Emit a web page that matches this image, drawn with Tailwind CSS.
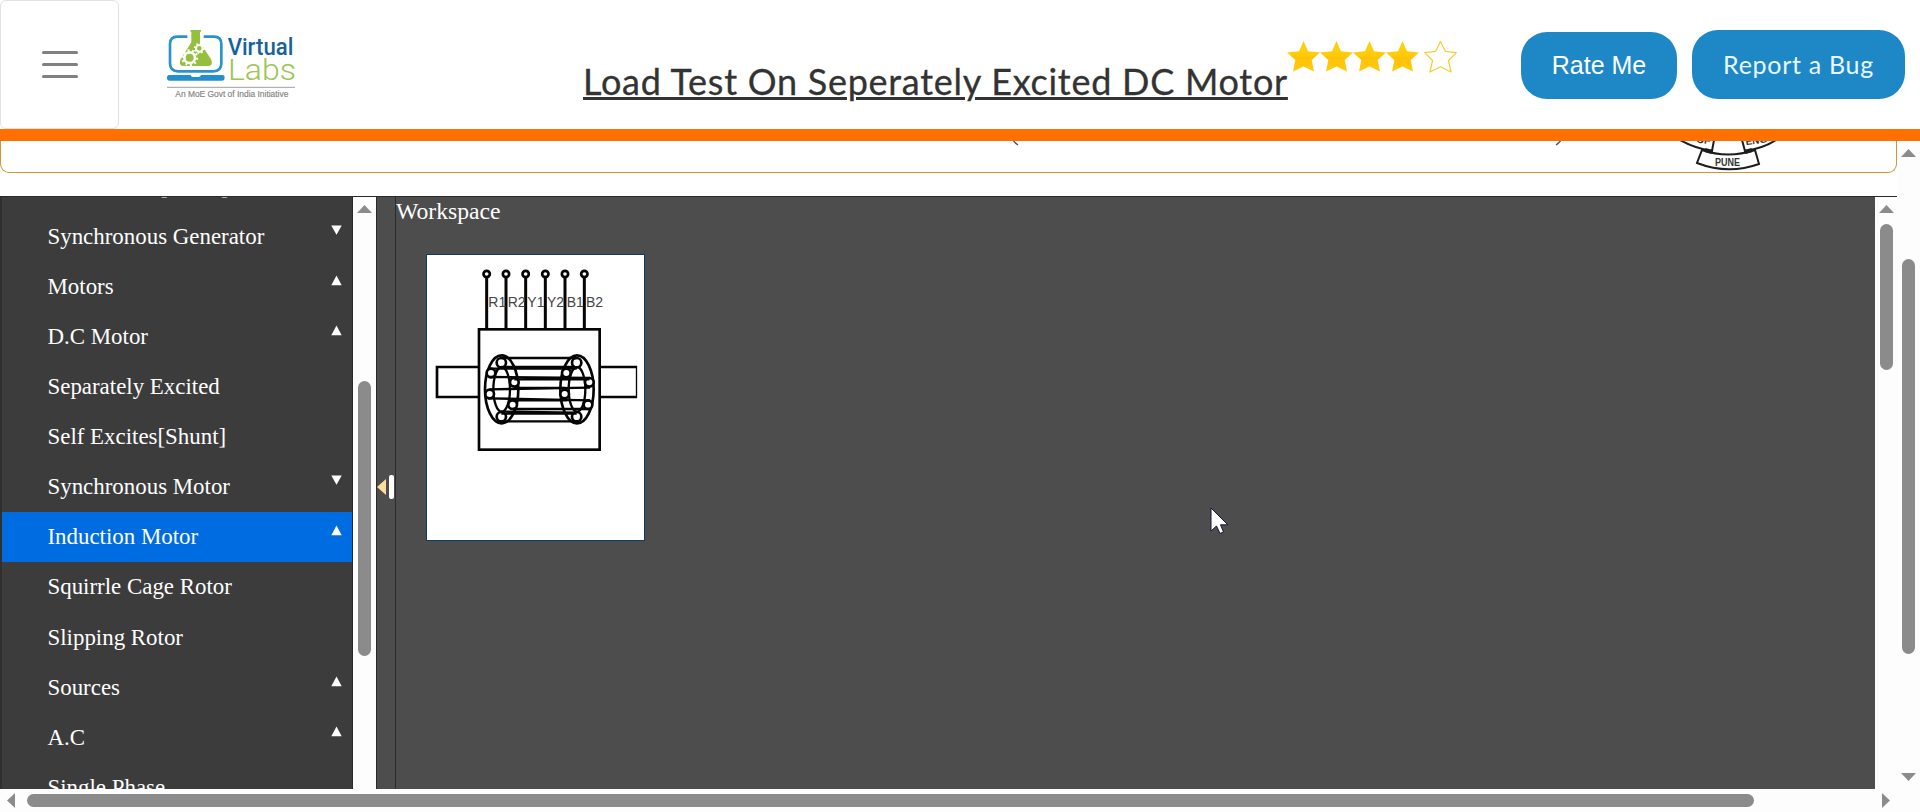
<!DOCTYPE html>
<html lang="en">
<head>
<meta charset="utf-8">
<title>Load Test On Seperately Excited DC Motor</title>
<script src="https://cdn.jsdelivr.net/npm/@tailwindcss/browser@4"></script>
</head>
<body class="bg-white">
<div class="flex h-[812px] w-[1920px] flex-col overflow-hidden bg-white">
  <header class="flex h-[129px] shrink-0 items-start">
    <button class="flex h-[129px] w-[119px] flex-col items-center justify-center gap-[9px] rounded-md border border-[#e2e2e2]" aria-label="Menu">
      <span class="h-[3px] w-9 rounded-full bg-[#808080]"></span>
      <span class="h-[3px] w-9 rounded-full bg-[#808080]"></span>
      <span class="h-[3px] w-9 rounded-full bg-[#808080]"></span>
    </button>
    <svg class="mt-5 ml-[31px] h-[90px] w-[160px]" viewBox="0 0 480 270">
      <path d="M112 50H82Q60 50 60 72V130Q60 154 84 154H190Q214 154 214 130V72Q214 50 192 50H161" fill="none" stroke="#2b93cc" stroke-width="8"/>
      <path d="M59 165H122Q124 171 128 171H146Q151 171 153 165H217Q224 165 224 173T217 182H59Q51 182 51 173T59 165Z" fill="#2490cb"/>
      <path d="M121 30H153V35H150V67L184 119Q190 138 173 138H102Q85 138 91 119L124 67V35H121Z" fill="#95c03d"/>
      <circle cx="119" cy="113" r="16" fill="none" stroke="#fff" stroke-width="8"/>
      <circle cx="119" cy="113" r="22" fill="none" stroke="#fff" stroke-width="7" stroke-dasharray="6 7.8"/>
      <circle cx="148" cy="85" r="10" fill="none" stroke="#fff" stroke-width="6"/>
      <circle cx="148" cy="85" r="14" fill="none" stroke="#fff" stroke-width="5" stroke-dasharray="5 6"/>
      <text x="233" y="105" font-family="Roboto, sans-serif" font-weight="500" font-size="70" fill="#156399" textLength="197" lengthAdjust="spacingAndGlyphs">Virtual</text>
      <text x="234" y="181" font-family="Roboto, sans-serif" font-weight="300" font-size="86" fill="#9bc653" textLength="204" lengthAdjust="spacingAndGlyphs">Labs</text>
      <path d="M51 202H435" stroke="#a0a0a0" stroke-width="3"/>
      <text x="76" y="231" font-family="Liberation Sans, sans-serif" font-size="25" fill="#858585" stroke="#858585" stroke-width=".5" textLength="339" lengthAdjust="spacingAndGlyphs">An MoE Govt of India Initiative</text>
    </svg>
    <h1 class="mt-[59px] ml-[273px] w-[704px] whitespace-nowrap font-['Lato'] text-[36px] leading-[44px] tracking-[0.74px] text-[#333] underline decoration-[3px] underline-offset-[2px] [-webkit-text-stroke:0.3px_#333]">Load Test On Seperately Excited DC Motor</h1>
    <div class="mt-10 flex h-[34px] w-[171px]">
      <svg class="h-[34px] w-[171px]" viewBox="0 0 171 34">
        <defs>
          <linearGradient id="gold" x1="0" y1="0" x2="0" y2="1"><stop offset="0" stop-color="#ffd20c"/><stop offset=".5" stop-color="#ffcb0b"/><stop offset=".52" stop-color="#ffc107"/><stop offset="1" stop-color="#ffcc0c"/></linearGradient>
          <path id="star" d="M16.500 1L21 11.200L33 12.500L24.700 20L27 31.500L16.500 26.500L6 31.500L8.300 20L0 12.500L12 11.200Z"/>
        </defs>
        <g fill="url(#gold)"><use href="#star"/><use href="#star" x="33"/><use href="#star" x="66"/><use href="#star" x="99"/></g>
        <path d="M153.500 1.500L158.300 11.300L169.300 12.600L161.500 20.500L164 32L153.500 26.800L143 32L145.500 20.500L137.700 12.600L148.700 11.300Z" fill="#fff" stroke="#fbcb32" stroke-width="1.200" stroke-linejoin="round"/>
      </svg>
    </div>
    <button class="mt-8 ml-[63px] h-[67px] w-[156px] rounded-[26px] bg-[#1e88c7] font-['Liberation_Sans'] text-[25px] leading-[67px] text-white">Rate Me</button>
    <button class="mt-[30px] ml-[15px] h-[69px] w-[213px] rounded-[26px] bg-[#1e88c7] font-['Lato'] text-[25px] leading-[67px] tracking-[0.7px] whitespace-nowrap text-[#eaf8ff]">Report a Bug</button>
  </header>
  <div class="h-3 shrink-0 bg-[#ff7000]"></div>
  <div class="flex h-[671px] shrink-0">
    <div class="flex w-[1897px] shrink-0 flex-col">
      <div class="h-8 shrink-0 overflow-hidden rounded-b-[9px] border border-t-0 border-[#cf9537]">
        <svg class="h-[31px] w-[1895px]" viewBox="1 141 1895 31" fill="none" stroke="#1d1d1d">
          <path d="M1013 140Q1015 143 1018 145M1561 140Q1559 143 1556 145" stroke="#555" stroke-width="1.500"/>
          <g stroke-width="2" fill="#fff">
            <path d="M1680 140Q1694 148 1712 151L1714 140M1776 140Q1764 148 1745 151L1742 140"/>
            <path d="M1702 150Q1728 159 1755 150L1759 164Q1728 175 1697 163Z"/>
            <path d="M1705 150L1712 152M1752 150L1745 152" stroke-width="4"/>
          </g>
          <g font-family="Liberation Sans, sans-serif" font-weight="bold" font-size="10" fill="#333" stroke="none">
            <text x="1715" y="166" textLength="25" lengthAdjust="spacingAndGlyphs">PUNE</text>
            <text x="1696" y="142.500" transform="rotate(8 1696 142)">OF</text>
            <text x="1746" y="145" transform="rotate(-7 1746 145)">ENG</text>
          </g>
        </svg>
      </div>
      <div class="mt-[23px] flex h-[593px] shrink-0 border-t border-[#2b2b2b] bg-[#4d4d4d] font-['Liberation_Serif'] text-[22.9px] text-white">
        <nav class="h-[592px] w-[353px] shrink-0 overflow-hidden border-r border-l-2 border-r-[#292929] border-l-[#303030] bg-[#3c3c3c]">
          <ul class="-mt-[35px] leading-[50px]">
            <li class="h-[50px] pl-[45.500px]">Self Excited[Shunt]</li>
            <li class="flex h-[50px] justify-between pr-[10px] pl-[45.500px]">Synchronous Generator<svg class="mt-3 h-[11px] w-[11px]" viewBox="0 0 11 11"><path d="M.3 1.500H10.700L5.500 10.700Z" fill="#fff"/></svg></li>
            <li class="flex h-[50px] justify-between pr-[10px] pl-[45.500px]">Motors<svg class="mt-[13px] h-[11px] w-[11px]" viewBox="0 0 11 11"><path d="M.3 10.200H10.700L5.500 .5Z" fill="#fff"/></svg></li>
            <li class="flex h-[50px] justify-between pr-[10px] pl-[45.500px]">D.C Motor<svg class="mt-[13px] h-[11px] w-[11px]" viewBox="0 0 11 11"><path d="M.3 10.200H10.700L5.500 .5Z" fill="#fff"/></svg></li>
            <li class="h-[50px] pl-[45.500px]">Separately Excited</li>
            <li class="h-[50px] pl-[45.500px]">Self Excites[Shunt]</li>
            <li class="flex h-[50px] justify-between pr-[10px] pl-[45.500px]">Synchronous Motor<svg class="mt-3 h-[11px] w-[11px]" viewBox="0 0 11 11"><path d="M.3 1.500H10.700L5.500 10.700Z" fill="#fff"/></svg></li>
            <li class="flex h-[50px] justify-between bg-[#006ce2] pr-[10px] pl-[45.500px]">Induction Motor<svg class="mt-[13px] h-[11px] w-[11px]" viewBox="0 0 11 11"><path d="M.3 10.200H10.700L5.500 .5Z" fill="#fff"/></svg></li>
            <li class="h-[51px] pl-[45.500px]">Squirrle Cage Rotor</li>
            <li class="h-[50px] pl-[45.500px]">Slipping Rotor</li>
            <li class="flex h-[50px] justify-between pr-[10px] pl-[45.500px]">Sources<svg class="mt-[13px] h-[11px] w-[11px]" viewBox="0 0 11 11"><path d="M.3 10.200H10.700L5.500 .5Z" fill="#fff"/></svg></li>
            <li class="flex h-[50px] justify-between pr-[10px] pl-[45.500px]">A.C<svg class="mt-[13px] h-[11px] w-[11px]" viewBox="0 0 11 11"><path d="M.3 10.200H10.700L5.500 .5Z" fill="#fff"/></svg></li>
            <li class="h-[50px] pl-[45.500px]">Single Phase</li>
          </ul>
        </nav>
        <div class="flex w-[23px] shrink-0 flex-col items-center bg-[#fdfdfd]">
          <svg class="mt-2 h-2 w-[15px]" viewBox="0 0 15 8"><path d="M0 8L7.500 0L15 8Z" fill="#8b8b8b"/></svg>
          <div class="mt-[168px] h-[275px] w-[13px] rounded-full bg-[#8b8b8b]"></div>
        </div>
        <div class="flex w-5 shrink-0 items-center border-x border-[#2b2b2b]">
          <svg class="-mt-[13px] h-6 w-[18px]" viewBox="0 0 18 24"><path d="M0 12L9 4V20Z" fill="#fbdf9b"/><rect x="12" y="0" width="5" height="24" rx="2" fill="#fff"/></svg>
        </div>
        <main class="min-w-0 flex-1">
          <div class="h-[57px] text-[23.700px] leading-[28px]">Workspace</div>
          <div class="ml-[30px] h-[287px] w-[219px] border border-[#0b3c63] bg-white">
            <svg class="h-[285px] w-[217px]" viewBox="51 45 651 855" fill="none" stroke="#050505" stroke-width="8">
              <path d="M230 113V266M288 113V266M347 113V266M406 113V266M465 113V266M523 113V266" stroke-width="9"/>
              <g stroke-width="8"><circle cx="230" cy="102" r="9.500"/><circle cx="288" cy="102" r="9.500"/><circle cx="347" cy="102" r="9.500"/><circle cx="406" cy="102" r="9.500"/><circle cx="465" cy="102" r="9.500"/><circle cx="523" cy="102" r="9.500"/></g>
              <rect x="207" y="268" width="362" height="361"/>
              <path d="M207 381H81V471H207M569 381H681M569 471H681"/><path d="M679.500 378V474" stroke-width="4"/>
              <g font-family="Liberation Sans, sans-serif" font-size="42" fill="#444" stroke="none">
                <text x="235" y="200">R1</text><text x="293" y="200">R2</text><text x="352" y="200">Y1</text><text x="411" y="200">Y2</text><text x="470" y="200">B1</text><text x="528" y="200">B2</text>
              </g>
              <ellipse cx="275" cy="448" rx="50" ry="102"/><ellipse cx="275" cy="448" rx="25" ry="67" stroke-width="7"/>
              <ellipse cx="501" cy="448" rx="50" ry="102"/><ellipse cx="501" cy="448" rx="25" ry="67" stroke-width="7"/>
              <g fill="#fff" stroke-width="8"><circle cx="274" cy="368" r="14"/><circle cx="243" cy="399" r="13"/><circle cx="313" cy="427" r="13"/><circle cx="239" cy="462" r="13"/><circle cx="308" cy="494" r="13"/><circle cx="274" cy="530" r="14"/><circle cx="500" cy="368" r="14"/><circle cx="469" cy="399" r="13"/><circle cx="538" cy="427" r="13"/><circle cx="464" cy="462" r="13"/><circle cx="534" cy="494" r="13"/><circle cx="500" cy="530" r="14"/></g>
              <path d="M274 354H500M239 386H500M274 381H495M239 411L540 414M313 418H538M239 448L540 443M313 444H464M234 475L540 481M308 481H470M308 507H540M274 515L500 518M274 521H500M274 544H500" stroke-width="7"/>
            </svg>
          </div>
        </main>
        <div class="flex w-[22px] shrink-0 flex-col items-center bg-[#fdfdfd]">
          <svg class="mt-2 ml-[1px] h-2 w-[15px]" viewBox="0 0 15 8"><path d="M0 8L7.500 0L15 8Z" fill="#8b8b8b"/></svg>
          <div class="mt-[11px] ml-[1px] h-[146px] w-[13px] rounded-full bg-[#8b8b8b]"></div>
        </div>
      </div>
      <div class="flex h-[23px] items-center bg-[#fdfdfd]">
        <svg class="ml-[7px] h-[15px] w-2" viewBox="0 0 8 15"><path d="M8 0L0 7.500L8 15Z" fill="#8b8b8b"/></svg>
        <div class="ml-3 h-[13px] w-[1727px] rounded-full bg-[#8b8b8b]"></div>
        <svg class="ml-32 h-[15px] w-2" viewBox="0 0 8 15"><path d="M0 0L8 7.500L0 15Z" fill="#8b8b8b"/></svg>
      </div>
    </div>
    <div class="flex w-[23px] flex-col items-center bg-[#fdfdfd]">
      <svg class="mt-2 h-2 w-[15px]" viewBox="0 0 15 8"><path d="M0 8L7.500 0L15 8Z" fill="#8b8b8b"/></svg>
      <div class="mt-[102px] h-[395px] w-[13px] rounded-full bg-[#8b8b8b]"></div>
      <svg class="mt-[119px] h-2 w-[15px]" viewBox="0 0 15 8"><path d="M0 0L7.500 8L15 0Z" fill="#8b8b8b"/></svg>
    </div>
  </div>
</div>
<!-- Mouse pointer over the workspace -->
<svg class="absolute top-[507px] left-[1210px] h-[28px] w-[20px]" viewBox="0 0 20 28"><path d="M1 1V24L6.500 19L10 26.500L13.500 25L10.500 17.800H17.800Z" fill="#fff" stroke="#151538" stroke-width="1"/></svg>
</body>
</html>
